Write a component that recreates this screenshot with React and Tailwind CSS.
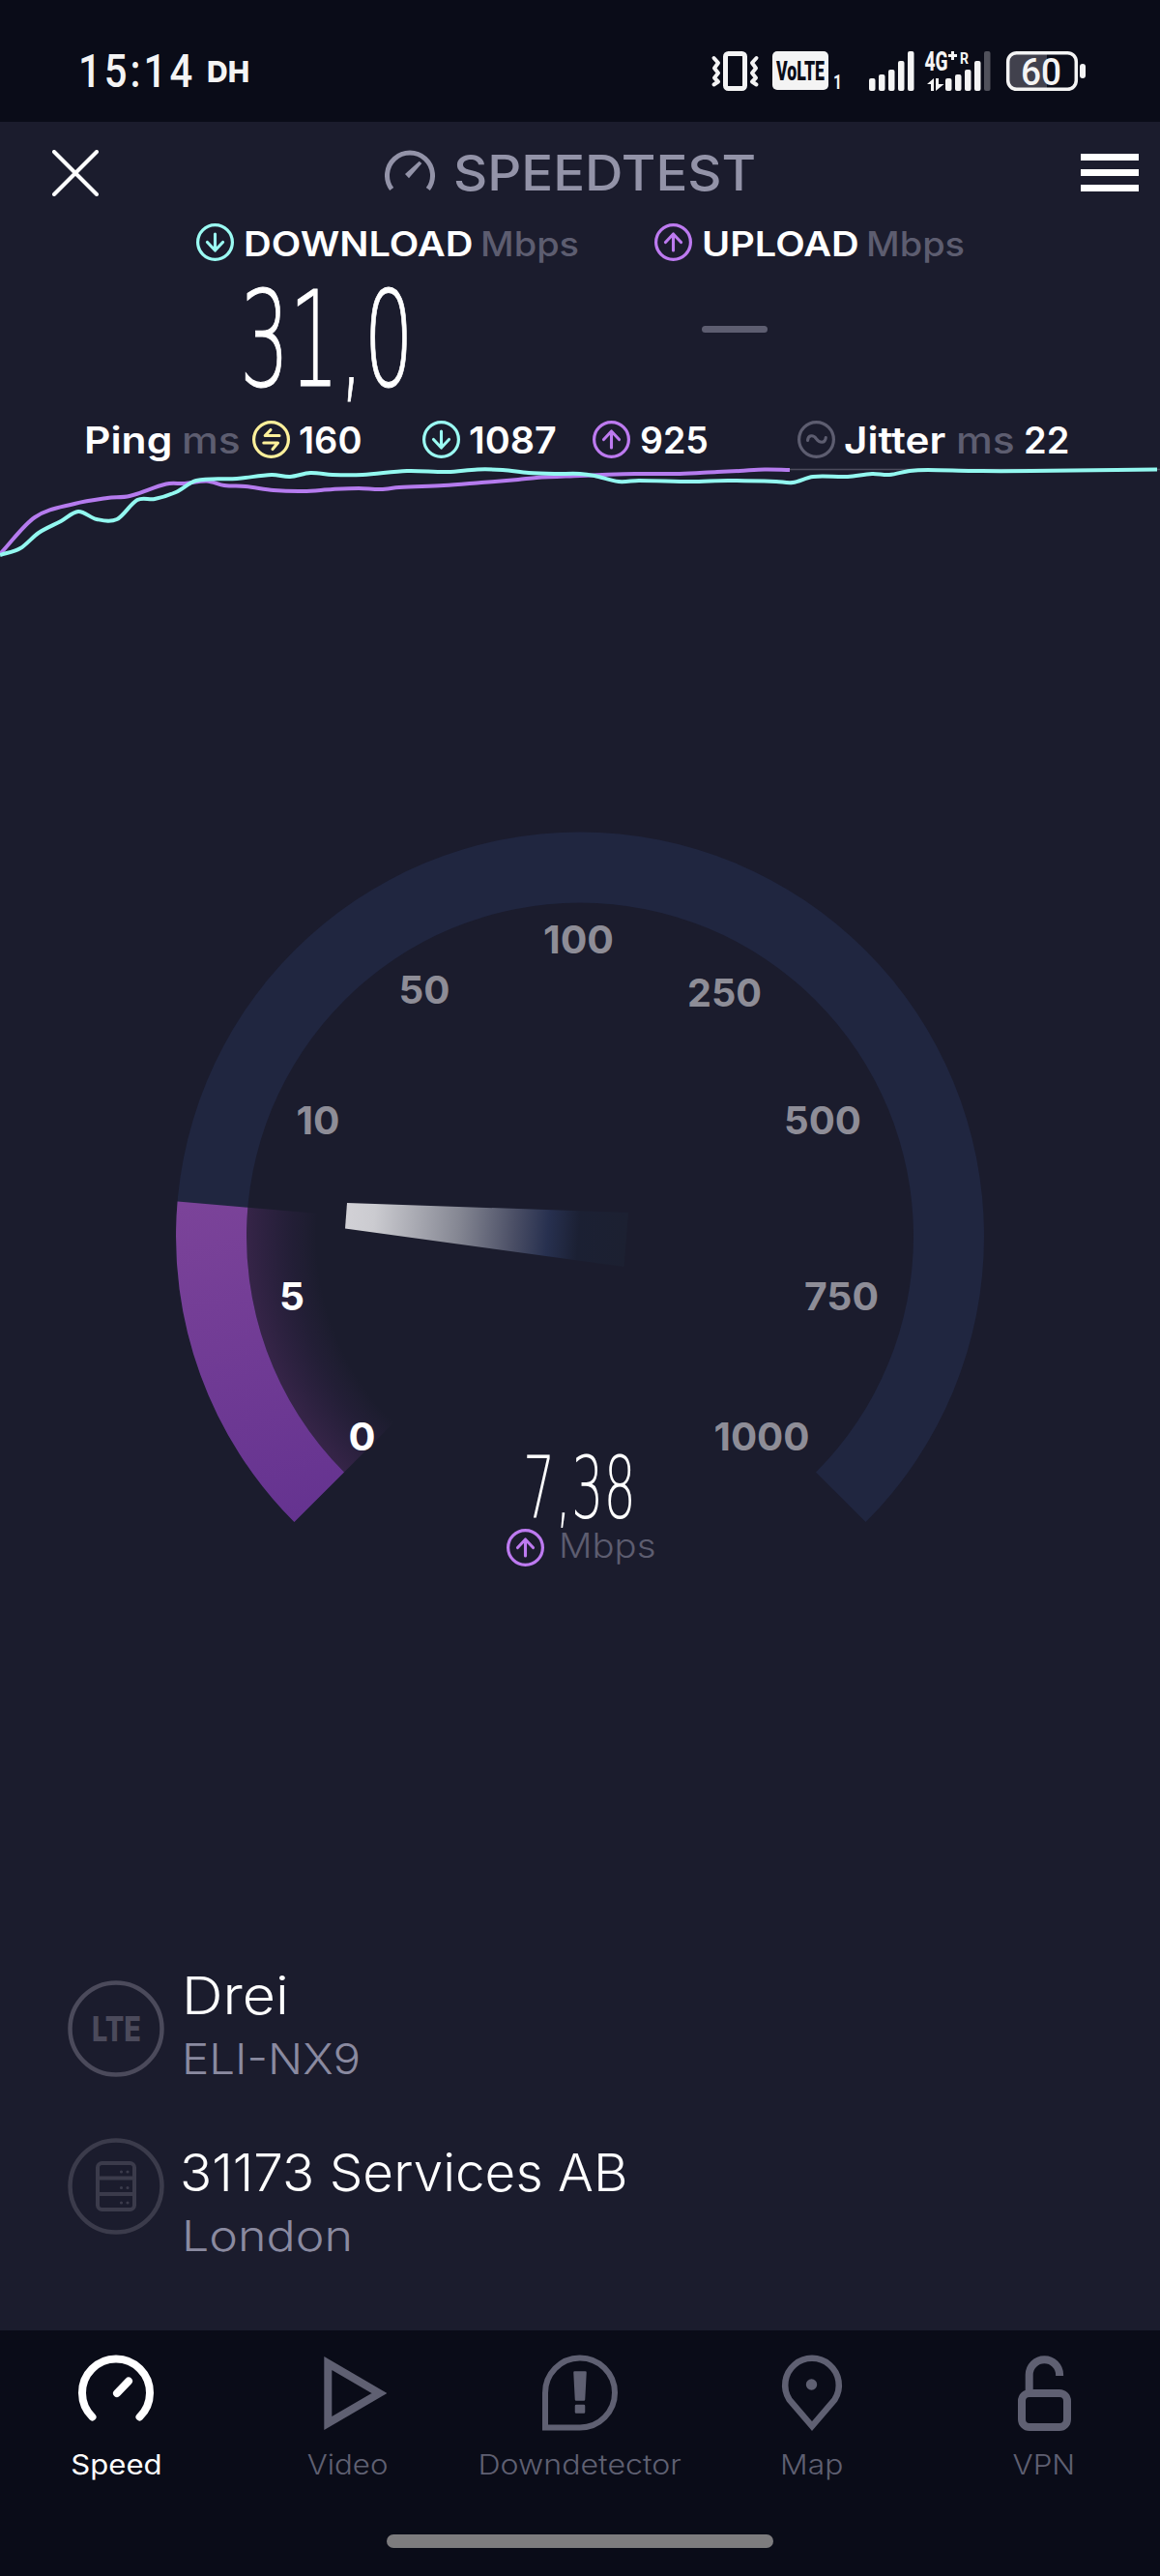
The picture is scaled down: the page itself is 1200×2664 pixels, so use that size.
import React from "react";

const DOWNLOAD_POINTS = [
  [0, 574], [21, 567], [40, 551], [63, 539], [81, 529], [100, 537], [121, 537], [142, 517], [160, 516],
  [182, 509], [203, 497], [245, 495], [281, 491], [300, 493], [321, 489], [344, 491], [375, 491],
  [421, 487], [463, 488], [494, 485.5], [520, 486], [547, 489], [574, 490], [600, 490], [615, 492],
  [640, 498], [661, 497], [715, 498], [753, 497], [803, 498], [820, 499], [841, 493], [877, 493],
  [902, 490], [920, 491], [941, 487], [960, 486], [1006, 487], [1067, 487], [1197, 485.5],
];

const UPLOAD_POINTS = [
  [0, 573], [36, 535], [77, 521], [111, 515], [134, 513], [172, 500.5], [191, 500], [214, 497.5],
  [232, 502], [254, 503], [283, 507], [314, 508], [344, 506], [371, 505], [394, 506], [413, 504],
  [459, 502], [498, 499], [536, 496], [555, 494], [600, 492], [623, 491], [657, 490], [703, 490],
  [742, 488], [765, 487], [791, 485.5], [817, 486],
];

const GAUGE_LABELS = [
  { text: "0", x: 374.5, y: 1485, width: 25, active: true },
  { text: "5", x: 302, y: 1340, width: 23, active: true },
  { text: "10", x: 329, y: 1158, width: 42 },
  { text: "50", x: 439, y: 1023.5, width: 50 },
  { text: "100", x: 598.5, y: 971.5, width: 70 },
  { text: "250", x: 749.5, y: 1026, width: 74 },
  { text: "500", x: 851, y: 1158, width: 77 },
  { text: "750", x: 870.5, y: 1340, width: 74 },
  { text: "1000", x: 788, y: 1485, width: 96 },
];

// Catmull-Rom spline through the samples
const smoothPath = (points) => {
  let d = `M${points[0][0]} ${points[0][1]}`;
  for (let i = 0; i < points.length - 1; i++) {
    const p0 = points[i - 1] || points[i];
    const p1 = points[i];
    const p2 = points[i + 1];
    const p3 = points[i + 2] || p2;
    const dx = (p2[0] - p1[0]) / 3;
    const s1 = (p2[1] - p0[1]) / (p2[0] - p0[0]);
    const s2 = (p3[1] - p1[1]) / (p3[0] - p1[0]);
    d += ` C${p1[0] + dx} ${p1[1] + s1 * dx} ${p2[0] - dx} ${p2[1] - s2 * dx} ${p2[0]} ${p2[1]}`;
  }
  return d;
};

const ICON_PATHS = {
  down: "M19.5 11v16M11.5 19.5l8 8.5 8-8.5",
  up: "M19.5 28V12M11.5 19.5l8-8.5 8 8.5",
  swap: "M28 15.5H13.2L19 9.5M11.8 23H26.5L21 29.5",
  wave: "M10.5 20.5C11 14.5 16.5 14.5 19.5 18.8S28.5 24 29.3 17.5",
};

const CircleIcon = ({ type, className }) => (
  <svg viewBox="0 0 39 39" className={`size-[39px] shrink-0 ${className}`} fill="none" stroke="currentColor">
    <circle cx="19.5" cy="19.5" r="17.9" strokeWidth="3.2" />
    <path d={ICON_PATHS[type]} strokeWidth="3.1" strokeLinecap="round" strokeLinejoin="round" />
  </svg>
);

const Txt = ({ className, children }) => (
  <span className={`block shrink-0 origin-left whitespace-nowrap ${className}`}>{children}</span>
);

const StatusBar = () => (
  <div className="flex h-[126px] items-center bg-[#0a0c18] pt-[22px] font-['Roboto',sans-serif] text-[#f4f4f4]">
    <Txt className="ml-[81px] w-[133px] scale-x-[0.87] text-[48px] font-medium leading-none tracking-[3.5px]">15:14</Txt>
    <Txt className="w-[522px] font-['Inter',sans-serif] text-[30px] font-extrabold leading-none">DH</Txt>
    <svg viewBox="736 50 390 48" className="h-[48px] w-[390px] overflow-visible" fill="currentColor">
      {/* vibrate */}
      <rect x="750.5" y="55.5" width="20" height="36" rx="3" fill="none" stroke="currentColor" strokeWidth="5" />
      <g fill="none" stroke="currentColor" strokeWidth="4" strokeLinejoin="round" strokeLinecap="round">
        <path d="M738.5 60l4.500 5-4 5.500 4 5-4 5 4 4-4.500 3" />
        <path d="M782.500 60l-4.500 5 4 5.500-4 5 4 5-4 4 4.500 3" />
      </g>
      {/* VoLTE */}
      <rect x="799" y="53" width="58" height="40" rx="5" />
      <text x="803" y="82.500" fill="#0a0c18" fontSize="27" fontWeight="900" textLength="50" lengthAdjust="spacingAndGlyphs">VoLTE</text>
      <text x="862" y="92" fontSize="21" fontWeight="700" textLength="9" lengthAdjust="spacingAndGlyphs">1</text>
      {/* first SIM */}
      <rect x="899" y="81" width="6.500" height="13" rx="2" />
      <rect x="909" y="77" width="6.500" height="17" rx="2" />
      <rect x="919" y="72" width="6.500" height="22" rx="2" />
      <rect x="929" y="63" width="6.500" height="31" rx="2" />
      <rect x="939" y="53" width="6.500" height="41" rx="2" />
      {/* second SIM */}
      <text x="956.500" y="73" fontSize="27" fontWeight="800" textLength="24" lengthAdjust="spacingAndGlyphs">4G</text>
      <path d="M981 57.500h9M985.500 53v9" stroke="currentColor" strokeWidth="3" />
      <text x="993" y="65.500" fontSize="17" fontWeight="700" textLength="9" lengthAdjust="spacingAndGlyphs">R</text>
      <path d="M959 87l7-6v13h-3v-7zM968 81h3v6h5.500l-8.500 7z" />
      <rect x="978" y="81" width="6.500" height="13" rx="2" />
      <rect x="988" y="77" width="6.500" height="17" rx="2" />
      <rect x="998" y="72" width="6.500" height="22" rx="2" />
      <rect x="1008" y="63" width="6.500" height="31" rx="2" />
      <rect x="1018" y="53" width="6.500" height="41" rx="2" fill="#50515b" />
      {/* battery */}
      <path d="M1083 55v37h-31q-9 0-9-9V64q0-9 9-9z" fill="#41414d" />
      <rect x="1042.700" y="54.700" width="70.600" height="37.600" rx="9" fill="none" stroke="currentColor" strokeWidth="3.500" />
      <rect x="1117" y="66" width="6" height="15" rx="3" />
      <text x="1056" y="87.500" fontSize="39" fontWeight="500" textLength="42" lengthAdjust="spacingAndGlyphs">60</text>
    </svg>
  </div>
);

const Header = () => (
  <header className="flex h-[105px] items-center">
    <svg viewBox="0 0 48 48" className="ml-[54px] size-[48px]" stroke="white" strokeWidth="4" strokeLinecap="round">
      <path d="M2 2l44 44M46 2L2 46" />
    </svg>
    <svg viewBox="398 152 52 52" className="ml-[296px] size-[52px] text-[#9393a8]" fill="none">
      <path d="M405.200 194.600A23.500 23.500 0 1 1 442.800 194.600" stroke="currentColor" strokeWidth="5" />
      <path d="M419 179l4 4.300L436.300 168l-2.600-2.300z" fill="currentColor" />
    </svg>
    <Txt className="ml-[19px] w-[649px] scale-x-[1.07] text-[51px] font-[550] leading-none text-[#9393a8]">SPEEDTEST</Txt>
    <div className="flex w-[60px] flex-col gap-[9px]">
      <div className="h-[7px] bg-white" />
      <div className="h-[7px] bg-white" />
      <div className="h-[7px] bg-white" />
    </div>
  </header>
);

const Results = () => (
  <section>
    <div className="flex h-[38px] items-center text-[35px] leading-none">
      <CircleIcon type="down" className="ml-[203px] text-[#9bfbf3]" />
      <Txt className="ml-[10px] mt-[5px] w-[245px] scale-x-[1.137] font-semibold">DOWNLOAD</Txt>
      <Txt className="mt-[5px] w-[180px] scale-x-[1.085] font-medium text-[#5d5d70]">Mbps</Txt>
      <CircleIcon type="up" className="text-[#bd7af0]" />
      <Txt className="ml-[10px] mt-[5px] w-[170px] scale-x-[1.135] font-semibold">UPLOAD</Txt>
      <Txt className="mt-[5px] scale-x-[1.085] font-medium text-[#5d5d70]">Mbps</Txt>
    </div>
    <div className="flex h-[156px] items-center">
      <Txt className="ml-[248px] mt-[9px] w-[478px] scale-x-[0.585] font-['DejaVu_Sans',sans-serif] text-[138px] font-extralight leading-none [-webkit-text-stroke:1px_white]">31,0</Txt>
      <div className="mb-[13px] h-[7px] w-[68px] rounded-full bg-[#5d5d70]" />
    </div>
  </section>
);

const PingRow = () => (
  <div className="flex h-[55px] items-center pt-[4px] text-[38px] font-semibold leading-none">
    <Txt className="ml-[87px] w-[101px] scale-x-[1.12]">Ping</Txt>
    <Txt className="w-[73px] scale-x-[1.12] font-medium text-[#5d5d70]">ms</Txt>
    <CircleIcon type="swap" className="text-[#fdf09b]" />
    <Txt className="ml-[9px] w-[128px]">160</Txt>
    <CircleIcon type="down" className="text-[#9bfbf3]" />
    <Txt className="ml-[9px] w-[128px] scale-x-[1.04]">1087</Txt>
    <CircleIcon type="up" className="text-[#bd7af0]" />
    <Txt className="ml-[10px] w-[163px] scale-x-[0.985]">925</Txt>
    <CircleIcon type="wave" className="text-[#5d5d70]" />
    <Txt className="ml-[9px] w-[116px] scale-x-[1.11]">Jitter</Txt>
    <Txt className="w-[70px] scale-x-[1.12] font-medium text-[#5d5d70]">ms</Txt>
    <Txt>22</Txt>
  </div>
);

const LatencyChart = () => (
  <svg viewBox="0 480 1200 110" className="block h-[110px] w-full" fill="none" strokeWidth="4">
    <path d="M817 485.500H1200" stroke="#4b4b5c" strokeWidth="1.500" />
    <path d={smoothPath(UPLOAD_POINTS)} stroke="#b57bee" />
    <path d={smoothPath(DOWNLOAD_POINTS)} stroke="#93f8f0" />
  </svg>
);

const Gauge = () => (
  <section className="mt-[260px]">
    <svg viewBox="0 850 1200 655" className="block h-[655px] w-full overflow-visible">
      <defs>
        <linearGradient id="arc" gradientUnits="userSpaceOnUse" x1="200" y1="1243" x2="290" y2="1574">
          <stop offset="0" stopColor="#7b4399" />
          <stop offset="1" stopColor="#653390" />
        </linearGradient>
        <radialGradient id="glow" gradientUnits="userSpaceOnUse" cx="600" cy="1278.500" r="345">
          <stop offset="0.790" stopColor="#7b4399" stopOpacity="0" />
          <stop offset="0.860" stopColor="#6a3389" stopOpacity="0.090" />
          <stop offset="1" stopColor="#7b3a8c" stopOpacity="0.280" />
        </radialGradient>
        <linearGradient id="needle" gradientUnits="userSpaceOnUse" x1="358" y1="1257" x2="648" y2="1282">
          <stop offset="0" stopColor="#d2d1d6" />
          <stop offset="0.100" stopColor="#cbcbd0" />
          <stop offset="0.400" stopColor="#858793" />
          <stop offset="0.600" stopColor="#4a4e65" />
          <stop offset="0.720" stopColor="#27304f" />
          <stop offset="0.830" stopColor="#1b2033" />
          <stop offset="1" stopColor="#1c2031" />
        </linearGradient>
      </defs>
      <path d="M304.400 1574.100A418 418 0 1 1 895.600 1574.100L844 1522.500A345 345 0 1 0 356 1522.500Z" fill="#202640" />
      <path d="M304.400 1574.100A418 418 0 0 1 183.600 1242.500L256.300 1248.800A345 345 0 0 0 356 1522.500Z" fill="url(#arc)" />
      <path d="M356 1522.500A345 345 0 0 1 256.300 1248.800L330 1255L600 1278.500Z" fill="url(#glow)" />
      <path d="M359 1244L650 1254L645.500 1310L357 1270.500Z" fill="url(#needle)" />
      <g fontSize="39.500" fontWeight="700">
        {GAUGE_LABELS.map((label) => (
          <text
            key={label.text}
            x={label.x - label.width / 2 - 1.5}
            y={label.y + 14.5}
            textLength={label.width + 3}
            lengthAdjust="spacingAndGlyphs"
            fill={label.active ? "#ffffff" : "#8e8d97"}
          >
            {label.text}
          </text>
        ))}
      </g>
    </svg>
    <div className="flex h-[66px] items-center">
      <Txt className="ml-[541px] mt-[2px] scale-x-[0.59] font-['DejaVu_Sans',sans-serif] text-[89px] font-extralight leading-none">7,38</Txt>
    </div>
    <div className="mt-[10px] flex h-[39px] items-center">
      <CircleIcon type="up" className="ml-[524px] text-[#bd7af0]" />
      <Txt className="-mt-[4px] ml-[15px] scale-x-[1.095] text-[35px] font-light leading-none text-[#5d5d70]">Mbps</Txt>
    </div>
  </section>
);

const ConnectionInfo = () => (
  <section className="mt-[428px] flex flex-col gap-[63px] pl-[70px]">
    <div className="flex h-[100px]">
      <svg viewBox="0 0 100 100" className="size-[100px] text-[#4b4a5b]" fill="currentColor">
        <circle cx="50" cy="50" r="47.500" fill="none" stroke="currentColor" strokeWidth="4.500" />
        <text x="25" y="62.700" fontSize="35" fontWeight="800" textLength="51" lengthAdjust="spacingAndGlyphs">LTE</text>
      </svg>
      <div className="-mt-[17px] ml-[18px]">
        <Txt className="h-[66px] scale-x-[1.095] text-[54px] font-[360] leading-[66px]">Drei</Txt>
        <Txt className="h-[64px] scale-x-[1.08] text-[44px] font-light leading-[64px] text-[#8a8aa0]">ELI-NX9</Txt>
      </div>
    </div>
    <div className="flex h-[100px]">
      <svg viewBox="0 0 100 100" className="size-[100px] text-[#3b3b4b]" fill="none" stroke="currentColor">
        <circle cx="50" cy="50" r="47.500" strokeWidth="4.500" />
        <rect x="31" y="26" width="38" height="48" rx="4.500" strokeWidth="4" />
        <path d="M31 41.500h38M31 58h38" strokeWidth="4" />
        <path d="M55.500 35v0M62 35v0M55.500 51.500v0M62 51.500v0M55.500 67v0M62 67v0" strokeWidth="3.200" strokeLinecap="round" />
      </svg>
      <div className="mt-[3px] ml-[16px]">
        <Txt className="h-[66px] scale-x-[1.015] text-[54px] font-[360] leading-[66px]">31173 Services AB</Txt>
        <Txt className="ml-[2px] h-[64px] scale-x-[1.14] text-[44px] font-light leading-[64px] text-[#8a8aa0]">London</Txt>
      </div>
    </div>
  </section>
);

const NavItem = ({ label, labelClass, active, children }) => (
  <div className={`flex w-[240px] flex-col items-center ${active ? "text-white" : "text-[#5f6072]"}`}>
    <svg viewBox="0 0 80 80" className="size-[80px]" fill="none" stroke="currentColor">
      {children}
    </svg>
    <span className={`mt-[17px] block whitespace-nowrap text-[28px] leading-[34px] ${labelClass}`}>{label}</span>
  </div>
);

const BottomNav = () => (
  <nav className="mt-auto h-[254px] bg-[#0a0c18] pt-[25px]">
    <div className="flex">
      <NavItem label="Speed" labelClass="scale-x-[1.11]" active>
        <path d="M15.500 64.500A35 35 0 1 1 64.500 64.500M41 40l12-12.500" strokeWidth="8" strokeLinecap="round" />
      </NavItem>
      <NavItem label="Video" labelClass="scale-x-[1.115] font-light">
        <path d="M19.300 9v62L72.500 40z" strokeWidth="8" />
      </NavItem>
      <NavItem label="Downdetector" labelClass="scale-x-[1.147] font-light">
        <path d="M4 40A36 36 0 1 1 40 75.500H4z" strokeWidth="6" />
        <path d="M34.500 18.500h11L44 46.500h-8zM36 53h8v6.500h-8z" fill="currentColor" strokeWidth="2.500" strokeLinejoin="round" />
      </NavItem>
      <NavItem label="Map" labelClass="scale-x-[1.135] font-light">
        <path d="M40 74L16.500 46.500A27.800 27.800 0 1 1 63.500 46.500Z" strokeWidth="6.500" />
        <circle cx="39.500" cy="31" r="5.700" fill="currentColor" stroke="none" />
      </NavItem>
      <NavItem label="VPN" labelClass="scale-x-[1.12] font-light">
        <rect x="17" y="40" width="47" height="35" rx="8" strokeWidth="8" />
        <path d="M24.700 38V21a15.700 15.700 0 0 1 31.400 0V22" strokeWidth="8" />
      </NavItem>
    </div>
    <div className="mx-auto mt-[55px] h-[14px] w-[400px] rounded-full bg-[#7d7c7e]" />
  </nav>
);

export default function App() {
  return (
    <div className="flex h-[2664px] w-[1200px] flex-col overflow-hidden bg-[#1b1c2d] font-['Inter',sans-serif] text-white">
      <StatusBar />
      <Header />
      <Results />
      <PingRow />
      <LatencyChart />
      <Gauge />
      <ConnectionInfo />
      <BottomNav />
    </div>
  );
}
